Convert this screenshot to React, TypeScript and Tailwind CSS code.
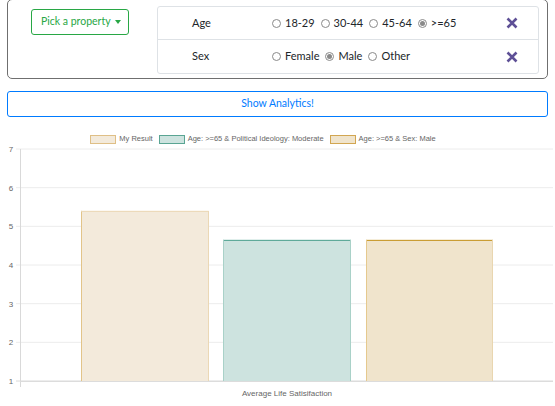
import React from 'react'

const AGES = ['18-29', '30-44', '45-64', '>=65']
const SEXES = ['Female', 'Male', 'Other']

function Radio({ label, checked }: { label: string; checked?: boolean }) {
  return (
    <label className="flex items-center gap-[4px] mr-[6px]">
      <span className="w-[9px] h-[9px] rounded-full border border-[#8a8a8a] bg-white flex items-center justify-center">
        {checked && <span className="w-[5px] h-[5px] rounded-full bg-[#8a8a8a]" />}
      </span>
      <span>{label}</span>
    </label>
  )
}

function CloseIcon() {
  return (
    <svg width="12" height="12" viewBox="0 0 12 12">
      <path d="M1.5 1.5 L10.5 10.5 M10.5 1.5 L1.5 10.5" stroke="#5e5096" strokeWidth="2.6" />
    </svg>
  )
}

function PropertyRow({ name, options, selected, last }: { name: string; options: string[]; selected: string; last?: boolean }) {
  return (
    <div className={`flex items-center h-[33px] ${last ? '' : 'border-b border-[#dee2e6]'}`}>
      <div className="w-[114px] pl-[34px]">{name}</div>
      <div className="flex items-center flex-1">
        {options.map((o) => (
          <Radio key={o} label={o} checked={o === selected} />
        ))}
      </div>
      <div className="w-[32px] flex items-center">
        <CloseIcon />
      </div>
    </div>
  )
}

const LEGEND = [
  { label: 'My Result', fill: '#f3eadb', stroke: '#dfbf86' },
  { label: 'Age: >=65 & Political Ideology: Moderate', fill: '#cde3df', stroke: '#5aa593' },
  { label: 'Age: >=65 & Sex: Male', fill: '#f0e4cc', stroke: '#d2a651' },
]

function Chart() {
  const top = 149
  const step = 38.67
  const yOf = (v: number) => top + (7 - v) * step
  const ticks = [7, 6, 5, 4, 3, 2, 1]
  return (
    <svg width="555" height="261" viewBox="0 145 555 261" className="block">
      {ticks.map((t) => (
        <g key={t}>
          <line x1={16} x2={553} y1={yOf(t)} y2={yOf(t)} stroke={t === 1 ? '#d9d9d9' : '#ececec'} strokeWidth={1} />
          <text x={11} y={yOf(t) + 3} fontSize="8" fill="#666" textAnchor="middle" fontFamily="Liberation Sans, Arial, sans-serif">
            {t}
          </text>
        </g>
      ))}
      <line x1={20.5} x2={20.5} y1={top} y2={387} stroke="#d9d9d9" strokeWidth={1} />

      <rect x={81} y={yOf(5.4)} width={127} height={yOf(1) - yOf(5.4)} fill="#f3eadb" />
      <line x1={81.5} x2={81.5} y1={yOf(5.4)} y2={yOf(1)} stroke="#e2c489" />
      <line x1={81} x2={208} y1={yOf(5.4) + 0.5} y2={yOf(5.4) + 0.5} stroke="#ebd8b5" />
      <line x1={208.5} x2={208.5} y1={yOf(5.4)} y2={yOf(1)} stroke="#ebd8b5" />

      <rect x={223} y={yOf(4.65)} width={128} height={yOf(1) - yOf(4.65)} fill="#cde3df" />
      <line x1={223} x2={351} y1={yOf(4.65) + 0.5} y2={yOf(4.65) + 0.5} stroke="#4ea28f" />
      <line x1={223.5} x2={223.5} y1={yOf(4.65)} y2={yOf(1)} stroke="#a9d1c8" />
      <line x1={350.5} x2={350.5} y1={yOf(4.65)} y2={yOf(1)} stroke="#a9d1c8" />

      <rect x={366} y={yOf(4.65)} width={127} height={yOf(1) - yOf(4.65)} fill="#f0e4cc" />
      <line x1={366} x2={493} y1={yOf(4.65) + 0.5} y2={yOf(4.65) + 0.5} stroke="#c4911c" />
      <line x1={366.5} x2={366.5} y1={yOf(4.65)} y2={yOf(1)} stroke="#e5c98e" />
      <line x1={492.5} x2={492.5} y1={yOf(4.65)} y2={yOf(1)} stroke="#e9d6b0" />

      <line x1={20} x2={553} y1={381.5} y2={381.5} stroke="#dcdcdc" />

      <text x={287} y={396} fontSize="8" fill="#666" textAnchor="middle" fontFamily="Liberation Sans, Arial, sans-serif">
        Average Life Satisifaction
      </text>
    </svg>
  )
}

export default function App() {
  return (
    <div className="w-[555px] h-[406px] overflow-hidden bg-white text-[11px] text-[#212529] font-['Lato','Noto_Sans',sans-serif]">
      <div className="mx-[7px] h-[80px] -mt-px border border-[#6f6f6f] rounded-[5px] flex">
        <div className="w-[149px] pl-[23px] pt-[9px]">
          <button className="h-[26px] pl-[9px] pr-[7px] border border-[#28a745] rounded-[3px] text-[#28a745] text-[10.5px] flex items-center gap-[4px]">
            Pick a property
            <span className="w-0 h-0 border-x-[3px] border-x-transparent border-t-[4px] border-t-[#28a745]" />
          </button>
        </div>
        <div className="mt-[6px] w-[382px] h-[68px] border border-[#dee2e6] rounded-[3px]">
          <PropertyRow name="Age" options={AGES} selected=">=65" />
          <PropertyRow name="Sex" options={SEXES} selected="Male" last />
        </div>
      </div>

      <div className="mx-[7px] mt-[12px] h-[26px] border border-[#007bff] rounded-[3px] flex items-center justify-center text-[#007bff] text-[10.5px]">
        Show Analytics!
      </div>

      <div className="mt-[17px] flex justify-center items-center gap-[3px] pr-[26px] text-[7.5px] text-[#666] font-['Liberation_Sans',Arial,sans-serif] h-[10px]">
        {LEGEND.map((l) => (
          <div key={l.label} className="flex items-center gap-[3px] mr-[3px]">
            <span className="w-[26px] h-[9px] border-[1.5px]" style={{ background: l.fill, borderColor: l.stroke }} />
            <span>{l.label}</span>
          </div>
        ))}
      </div>

      <div className="h-[1px]" />
      <Chart />
    </div>
  )
}
